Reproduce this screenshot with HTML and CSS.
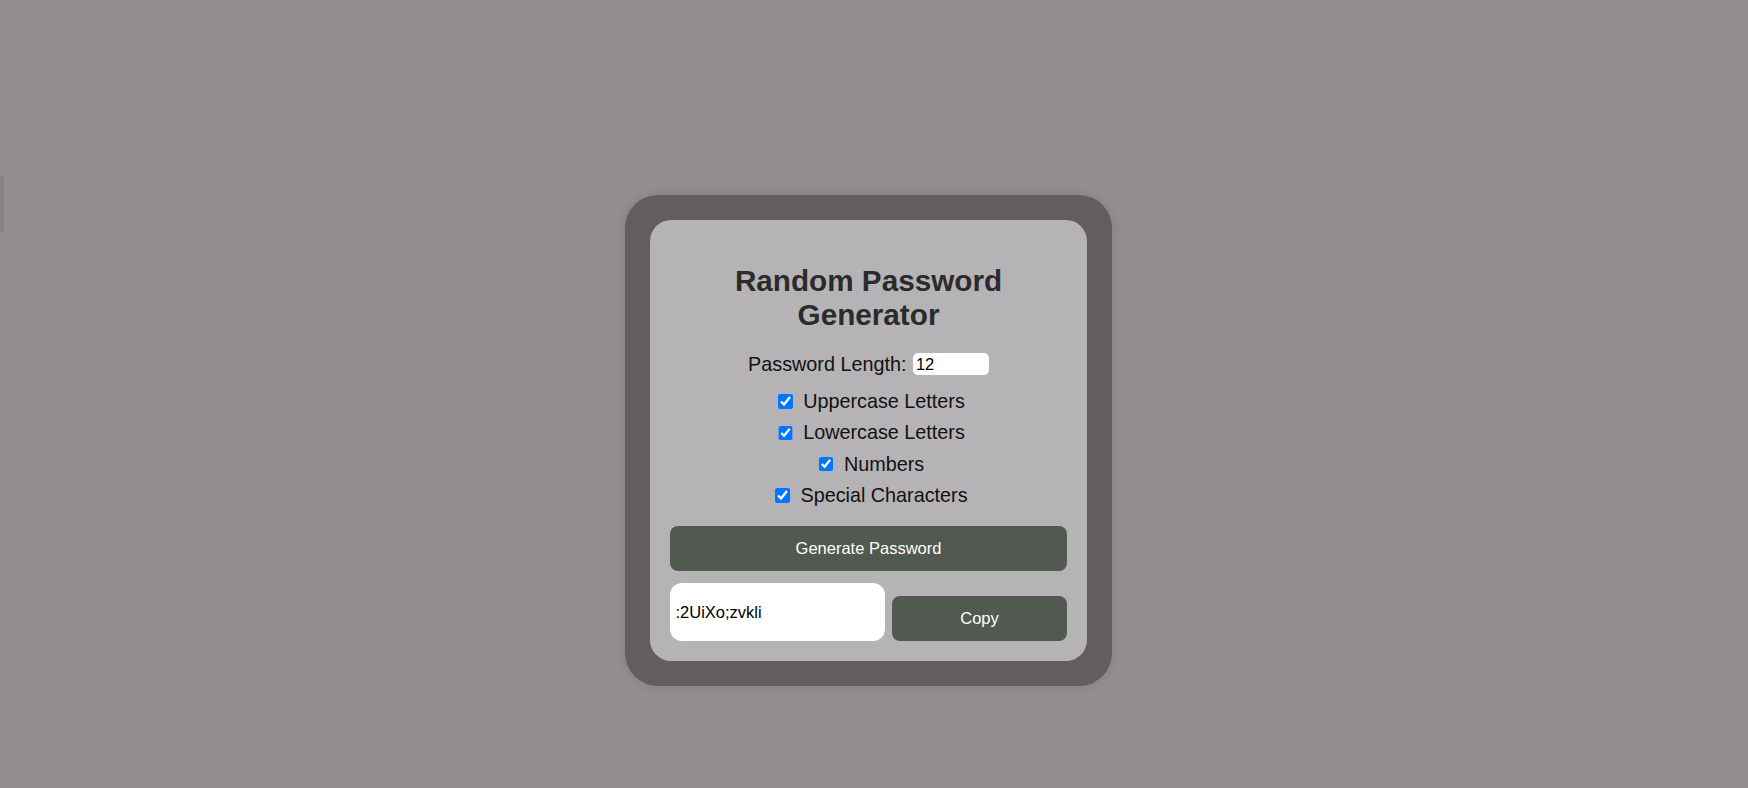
FILE: index.html
```html
<!DOCTYPE html>
<html lang="en">
<head>
<meta charset="utf-8">
<title>Random Password Generator</title>
<link rel="stylesheet" href="styles.css">
</head>
<body>
<div class="side-tab"></div>
<div class="page">
  <div class="frame">
    <div class="card">
      <h1 class="title">Random Password Generator</h1>
      <div class="length-row">
        <label class="length-label" for="len">Password Length:</label>
        <input class="length-input" id="len" type="number" value="12">
      </div>
      <div class="options">
        <label class="option"><input class="check" type="checkbox" checked><span>Uppercase Letters</span></label>
        <label class="option"><input class="check" type="checkbox" checked><span>Lowercase Letters</span></label>
        <label class="option"><input class="check" type="checkbox" checked><span>Numbers</span></label>
        <label class="option"><input class="check" type="checkbox" checked><span>Special Characters</span></label>
      </div>
      <button class="btn btn-generate">Generate Password</button>
      <div class="result-row">
        <input class="result" type="text" value=":2UiXo;zvkli">
        <button class="btn btn-copy">Copy</button>
      </div>
    </div>
  </div>
</div>
</body>
</html>
```
FILE: styles.css
```css
html, body {
  margin: 0;
  padding: 0;
}
body {
  background: #948f8f;
  font-family: "Liberation Sans", Arial, sans-serif;
  min-height: 788px;
}
.side-tab {
  position: fixed;
  left: -12px;
  top: 173px;
  width: 16px;
  height: 62px;
  border-radius: 8px;
  background: #878283;
}
.page {
  display: flex;
  justify-content: center;
  padding: 195px 11px 0 0;
}
.frame {
  width: 487px;
  box-sizing: border-box;
  padding: 25px;
  background: #625e5e;
  border-radius: 33px;
  box-shadow: 0 0 12px rgba(0, 0, 0, 0.12);
}
.card {
  background: #b5b3b5;
  border-radius: 21px;
  padding: 20px;
  text-align: center;
}
.title {
  margin: 23.5px 0 21px;
  font-size: 29.7px;
  line-height: 34px;
  font-weight: bold;
  color: #2b2b2b;
}
.length-row {
  display: flex;
  justify-content: center;
  align-items: center;
  font-size: 19.8px;
  color: #111;
}
.length-input {
  margin-left: 6.5px;
  width: 76px;
  height: 22px;
  box-sizing: border-box;
  border: none;
  border-radius: 5px;
  background: #fff;
  padding: 0 3px;
  font-family: "Liberation Sans", Arial, sans-serif;
  font-size: 16.5px;
  color: #000;
  outline: none;
}
.length-input::-webkit-inner-spin-button,
.length-input::-webkit-outer-spin-button {
  -webkit-appearance: none;
  margin: 0;
}
.options {
  margin-top: 14.5px;
  display: flex;
  flex-direction: column;
  align-items: center;
  gap: 8.6px;
}
.option {
  display: flex;
  align-items: center;
  font-size: 19.8px;
  line-height: 22.8px;
  color: #111;
}
.check {
  width: 14.5px;
  height: 14.5px;
  margin: 0 10.5px 0 6px;
}
.btn {
  border: none;
  background: #525951;
  color: #fff;
  font-family: "Liberation Sans", Arial, sans-serif;
  font-size: 16.5px;
  border-radius: 8px;
  cursor: pointer;
}
.btn-generate {
  display: block;
  width: 100%;
  height: 45px;
  margin-top: 19.5px;
}
.result-row {
  margin-top: 12px;
  display: flex;
  align-items: flex-end;
  gap: 7px;
}
.result {
  width: 215px;
  height: 58px;
  box-sizing: border-box;
  border: none;
  border-radius: 12px;
  background: #fff;
  padding: 0 5.5px;
  font-family: "Liberation Sans", Arial, sans-serif;
  font-size: 16.5px;
  color: #000;
  outline: none;
}
.btn-copy {
  width: 175px;
  height: 45px;
}
```
